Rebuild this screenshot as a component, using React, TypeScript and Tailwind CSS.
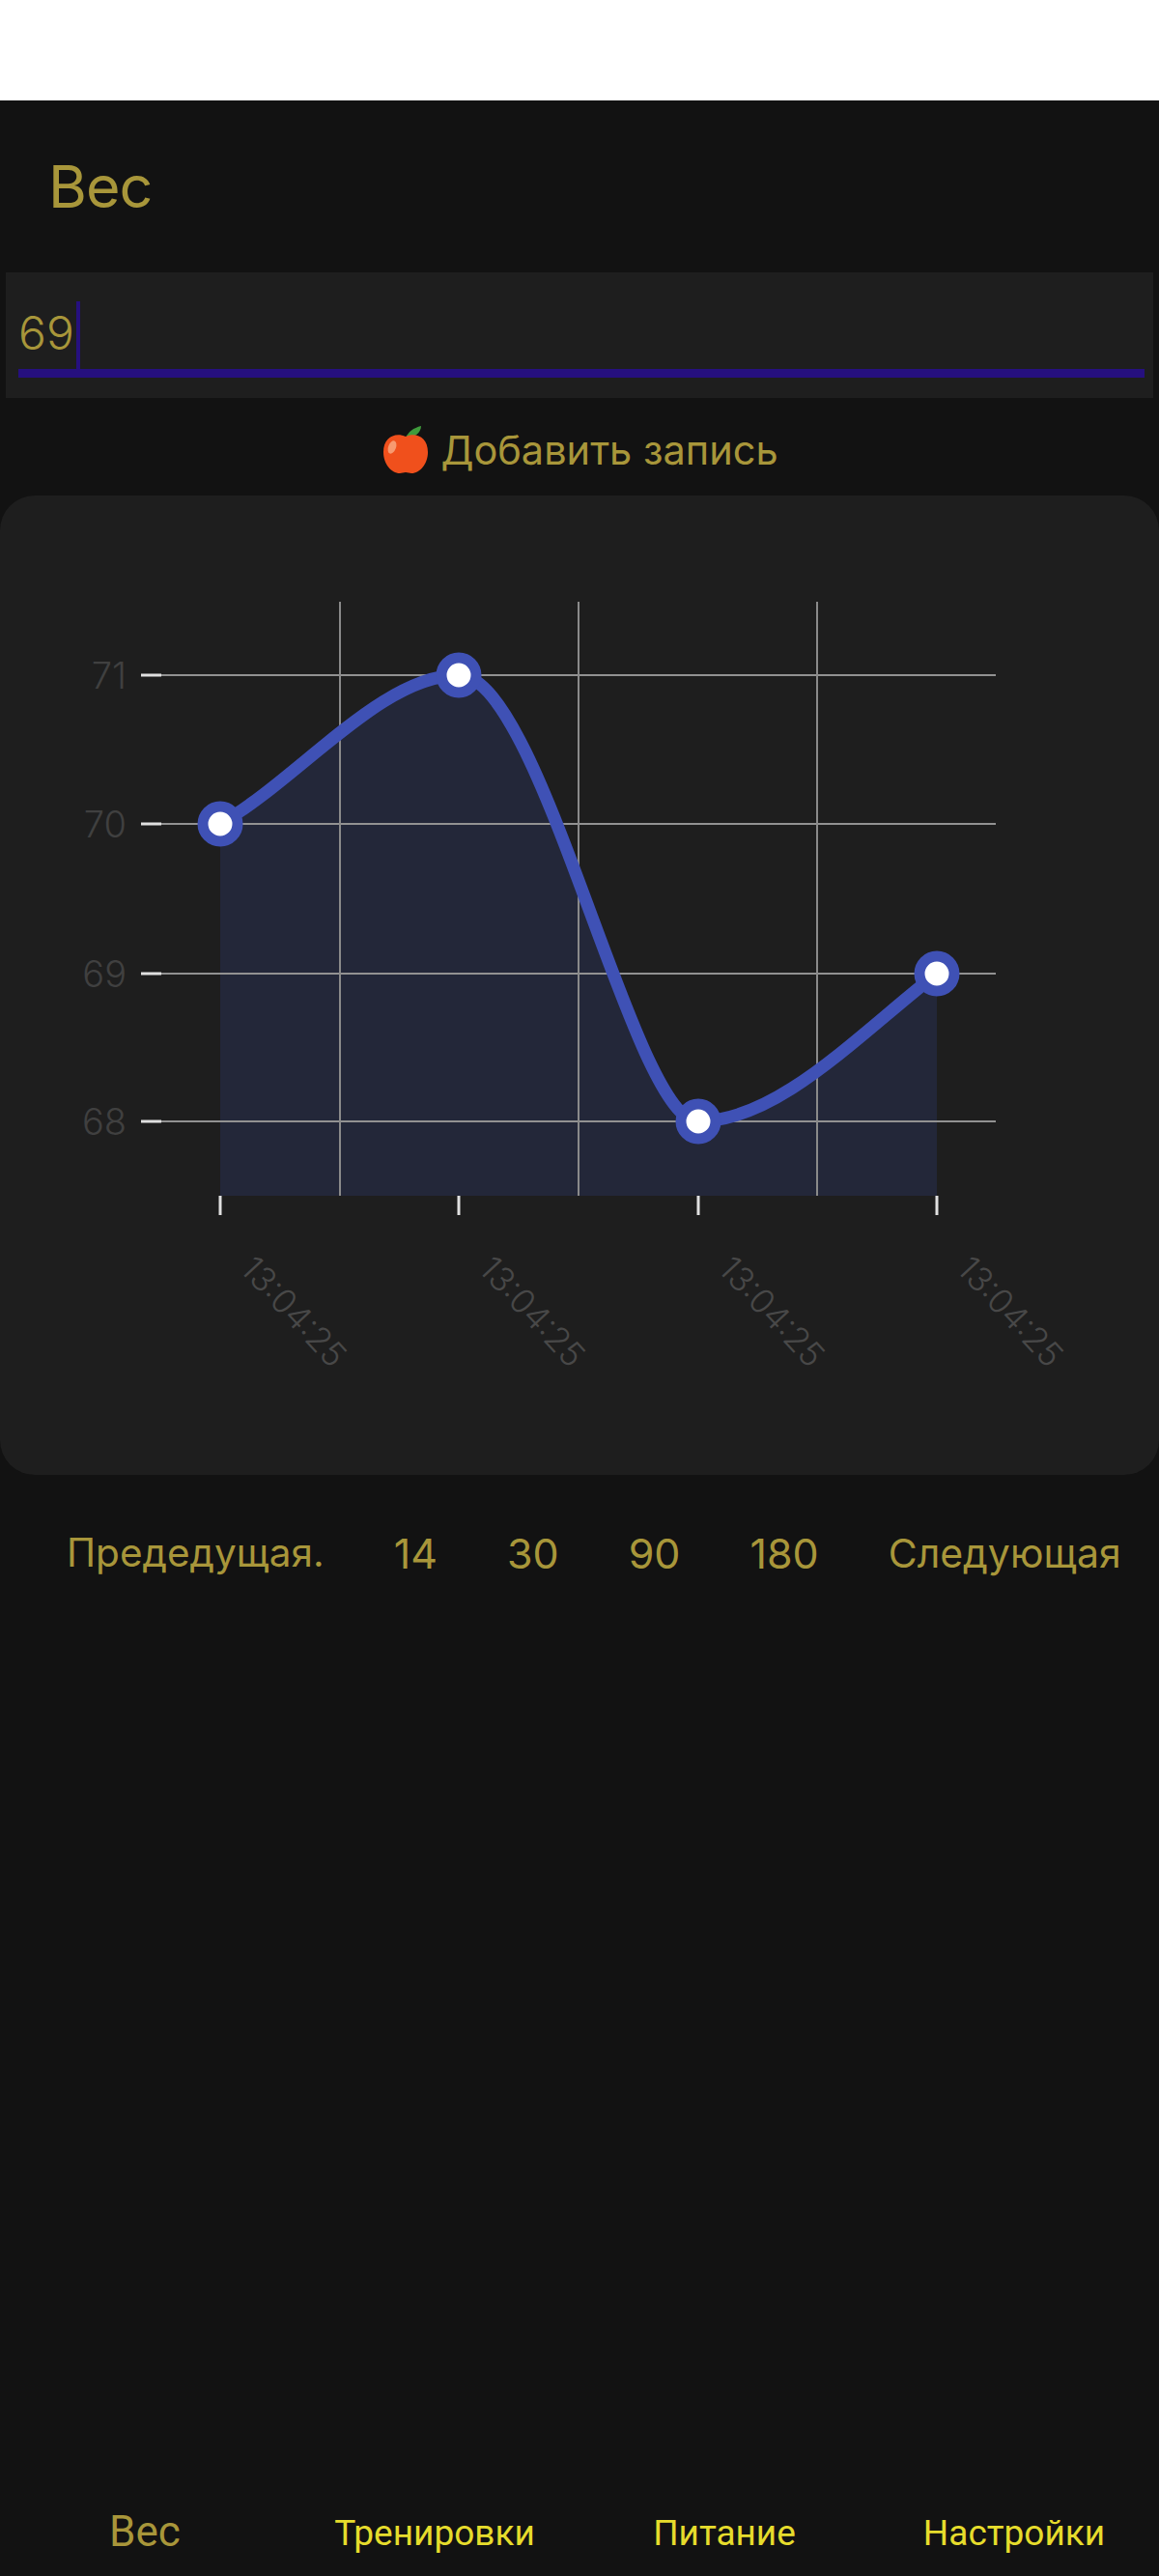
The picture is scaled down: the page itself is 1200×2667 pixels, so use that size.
import React from 'react';

const gold = 'text-[#a8963a]';
const fontStack = "font-['Inter','Noto_Sans',sans-serif]";

const yTicks = [
  { label: '71', y: 699 },
  { label: '70', y: 853 },
  { label: '69', y: 1008 },
  { label: '68', y: 1161 },
];

const points = [
  { x: 228, y: 853 },
  { x: 475, y: 699 },
  { x: 723, y: 1161 },
  { x: 970, y: 1008 },
];

const top = 513;
const curve =
  `M228 ${853 - top} C310 ${806 - top} 395 ${699 - top} 475 ${699 - top} ` +
  `C561 ${699 - top} 655 ${1161 - top} 723 ${1161 - top} ` +
  `C805 ${1161 - top} 888 ${1072 - top} 970 ${1008 - top}`;

function Apple() {
  return (
    <svg viewBox="0 0 48 50" className="w-[48px] h-[50px] shrink-0">
      <path d="M24 12C27 6 32 2 40 0C40 7 33 12 25 13Z" fill="#3f9b3c" />
      <path
        d="M24 11C13 6 1 12 1 27C1 39 9 49 18 49C20 49 22 48 24 48C26 48 28 49 30 49C39 49 47 39 47 27C47 12 35 6 24 11Z"
        fill="#f0501c"
      />
      <ellipse cx="10" cy="22" rx="4" ry="7" fill="#f79a70" transform="rotate(20 10 22)" />
    </svg>
  );
}

function Chart() {
  return (
    <svg viewBox="0 0 1200 1014" className="w-full h-full" fontFamily="Inter, sans-serif">
      <path d={`${curve} L970 ${1238 - top} L228 ${1238 - top} Z`} fill="#232739" />
      {yTicks.map((t) => (
        <g key={t.label}>
          <line x1="146" x2="1031" y1={t.y - top} y2={t.y - top} stroke="#929292" strokeWidth="2" />
          <line x1="146" x2="167" y1={t.y - top} y2={t.y - top} stroke="#e0e0e0" strokeWidth="3" />
          <text x="131" y={t.y - top + 14} textAnchor="end" fontSize="38" fontWeight="300" fill="#404040">
            {t.label}
          </text>
        </g>
      ))}
      {[352, 599, 846].map((x) => (
        <line key={x} x1={x} x2={x} y1={623 - top} y2={1238 - top} stroke="#8a8a8a" strokeWidth="2" />
      ))}
      {points.map((p) => (
        <g key={p.x}>
          <line x1={p.x} x2={p.x} y1={1238 - top} y2={1258 - top} stroke="#e0e0e0" strokeWidth="3" />
          <text
            x="0"
            y="0"
            fontSize="35"
            fontWeight="300"
            fill="#484848"
            transform={`translate(${p.x + 19} ${1315 - top}) rotate(47)`}
          >
            13:04:25
          </text>
        </g>
      ))}
      <path d={curve} fill="none" stroke="#3f51b5" strokeWidth="13" />
      {points.map((p) => (
        <circle key={p.x} cx={p.x} cy={p.y - top} r="18" fill="#ffffff" stroke="#3f51b5" strokeWidth="11" />
      ))}
    </svg>
  );
}

export default function App() {
  return (
    <div className={`h-[2667px] flex flex-col bg-white ${fontStack}`}>
      <div className="h-[104px] shrink-0 bg-white" />
      <div className="flex-1 flex flex-col bg-[#121212]">
        <h1 className={`pl-[50px] pt-[45px] h-[178px] text-[61px] leading-[88px] font-normal tracking-[-1px] ${gold}`}>Вес</h1>

        <div className="mx-[6px] h-[130px] bg-[#1e1e1e] relative">
          <div className={`pl-[13px] pt-[33px] text-[48px] leading-[60px] font-light ${gold}`}>69</div>
          <div className="absolute left-[73px] top-[30px] w-[4px] h-[70px] bg-[#26107f]" />
          <div className="absolute left-[13px] right-[9px] top-[100px] h-[9px] bg-[#26107f]" />
        </div>

        <div className="h-[101px] pt-[6px] pl-[2px] flex items-center justify-center gap-[12px]">
          <Apple />
          <span className={`text-[41.5px] leading-[56px] ${gold}`}>Добавить запись</span>
        </div>

        <div className="h-[1014px] rounded-[36px] bg-[#1e1e1e] overflow-hidden">
          <Chart />
        </div>

        <div className={`flex items-center gap-[72px] pl-[69px] h-[162px] text-[43px] leading-[56px] ${gold}`}>
          <span className="text-[40.5px]">Предедущая.</span>
          <span>14</span>
          <span>30</span>
          <span>90</span>
          <span>180</span>
          <span className="text-[41px]">Следующая</span>
        </div>

        <div className="mt-auto h-[106px] grid grid-cols-4 items-start font-['Roboto',sans-serif]">
          <div className="text-center text-[44px] leading-[60px] pt-[30px] text-[#a8963a]">Вес</div>
          <div className="text-center text-[37px] leading-[60px] pt-[32px] text-[#e6dc2c]">Тренировки</div>
          <div className="text-center text-[37px] leading-[60px] pt-[32px] text-[#e6dc2c]">Питание</div>
          <div className="text-center text-[37px] leading-[60px] pt-[32px] text-[#e6dc2c]">Настройки</div>
        </div>
      </div>
    </div>
  );
}
